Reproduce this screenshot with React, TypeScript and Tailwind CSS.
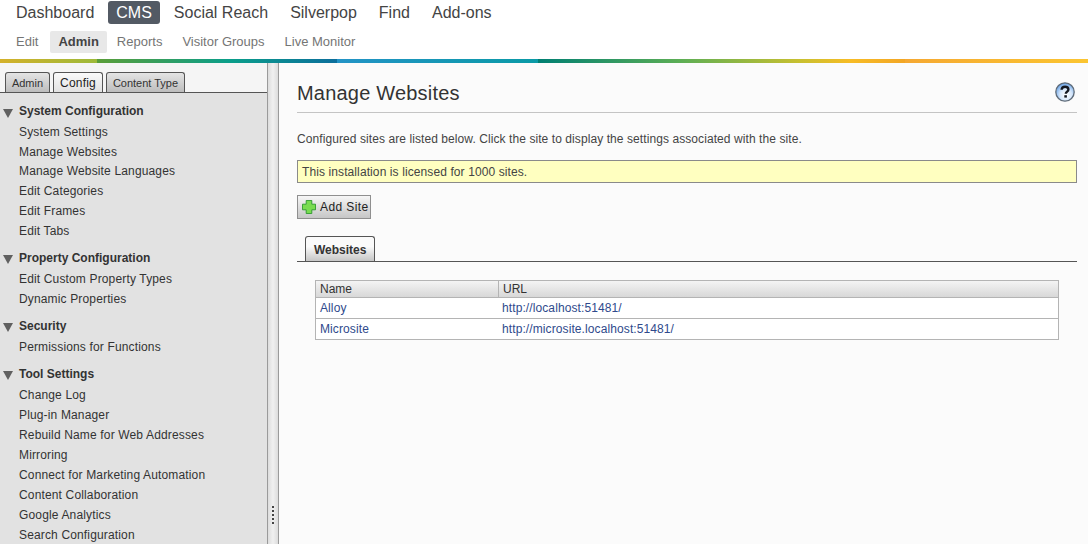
const font = "font-['Liberation_Sans',Arial,sans-serif]";

const mainNav = ["Dashboard", "CMS", "Social Reach", "Silverpop", "Find", "Add-ons"];
const subNav = ["Edit", "Admin", "Reports", "Visitor Groups", "Live Monitor"];

const sections = [
  {
    title: "System Configuration",
    items: ["System Settings", "Manage Websites", "Manage Website Languages", "Edit Categories", "Edit Frames", "Edit Tabs"],
  },
  {
    title: "Property Configuration",
    items: ["Edit Custom Property Types", "Dynamic Properties"],
  },
  {
    title: "Security",
    items: ["Permissions for Functions"],
  },
  {
    title: "Tool Settings",
    items: [
      "Change Log",
      "Plug-in Manager",
      "Rebuild Name for Web Addresses",
      "Mirroring",
      "Connect for Marketing Automation",
      "Content Collaboration",
      "Google Analytics",
      "Search Configuration",
    ],
  },
];

const sites = [
  { name: "Alloy", url: "http://localhost:51481/" },
  { name: "Microsite", url: "http://microsite.localhost:51481/" },
];

const TopNav = () => (
  <div className="h-[59px] bg-white">
    <div className="flex h-[24px] items-end gap-[2px] pl-[6px]">
      {mainNav.map((item) => (
        <span
          key={item}
          className={
            item === "CMS"
              ? "mx-[2px] flex h-[23px] items-center rounded-[3px] bg-[#535a64] px-[8px] text-[16px] text-white"
              : "flex h-[23px] items-center px-[10px] text-[16px] text-[#444444]"
          }
        >
          {item}
        </span>
      ))}
    </div>
    <div className="mt-[7px] flex items-center pl-[6px]">
      {subNav.map((item) => (
        <span
          key={item}
          className={
            item === "Admin"
              ? "ml-[2px] flex h-[22px] items-center rounded-[2px] bg-[#e8e8e8] px-[8px] text-[13px] font-bold text-[#444444]"
              : "flex h-[22px] items-center px-[10px] text-[13px] text-[#757575]"
          }
        >
          {item}
        </span>
      ))}
    </div>
  </div>
);

const SideTab = ({ label, width, active }: { label: string; width: string; active?: boolean }) => (
  <span
    className={
      active
        ? `flex h-[20px] items-center justify-center rounded-t-[3px] border border-b-0 border-[#555555] bg-gradient-to-b from-[#fafafa] to-[#e2e2e2] pt-[1px] text-[12px] tracking-[0.2px] text-[#222222] ${width}`
        : `flex h-[20px] items-center justify-center rounded-t-[3px] border border-b-0 border-[#555555] bg-gradient-to-b from-[#e4e4e4] to-[#bdbdbd] pt-[1px] text-[11px] text-[#333333] ${width}`
    }
  >
    {label}
  </span>
);

const Sidebar = () => (
  <div className="flex h-full w-[279px] shrink-0">
    <div className="flex w-[267px] flex-col overflow-hidden bg-[#e2e2e2]">
      <div className="flex h-[30px] shrink-0 items-end gap-[3px] border-b border-[#555555] bg-[#f5f5f5] pl-[5px]">
        <SideTab label="Admin" width="w-[45px]" />
        <SideTab label="Config" width="w-[50px]" active />
        <SideTab label="Content Type" width="w-[79px]" />
      </div>
      <div className="pt-[8px]">
        {sections.map((section, index) => (
          <div key={section.title} className="mb-[7px]">
            <div className="flex h-[21px] items-center gap-[6px] pb-[1px] pl-[3px]">
              <svg width="10" height="9" viewBox="0 0 10 9" className="mt-[4px] shrink-0">
                <path d="M0 0h10L5 9z" fill="#606060" />
              </svg>
              <span className="text-[12px] font-bold text-[#333333]">{section.title}</span>
            </div>
            {section.items.map((item) => (
              <div
                key={item}
                className={
                  index === 0
                    ? "flex h-[19.8px] items-center pl-[19px] text-[12px] tracking-[0.15px] text-[#333333]"
                    : "flex h-[20px] items-center pl-[19px] text-[12px] tracking-[0.15px] text-[#333333]"
                }
              >
                {item}
              </div>
            ))}
          </div>
        ))}
      </div>
    </div>
    <div className="flex w-[12px] items-end justify-center border-x border-[#9a9a9a] bg-gradient-to-r from-[#dddddd] via-[#f0f0f0] to-[#dcdcdc] pb-[20px]">
      <div className="flex flex-col gap-[2px]">
        {[0, 1, 2, 3, 4].map((i) => (
          <span key={i} className="block h-[2px] w-[2px] bg-[#444444]" />
        ))}
      </div>
    </div>
  </div>
);

const HelpIcon = () => (
  <svg width="20" height="20" viewBox="0 0 20 20">
    <defs>
      <radialGradient id="help" cx="0.55" cy="0.65" r="0.65">
        <stop offset="0" stopColor="#ffffff" />
        <stop offset="0.5" stopColor="#d5e6fa" />
        <stop offset="1" stopColor="#5f9de6" />
      </radialGradient>
    </defs>
    <circle cx="10" cy="10" r="9.2" fill="url(#help)" stroke="#5f6b78" strokeWidth="1.3" />
    <path
      d="M6.6 7.8c.1-2 1.5-3.1 3.5-3.1 1.9 0 3.3 1.1 3.3 2.7 0 2.3-2.6 2.2-2.6 4.4"
      fill="none"
      stroke="#141821"
      strokeWidth="2.4"
    />
    <rect x="9.3" y="13.2" width="2.6" height="2.4" fill="#141821" />
  </svg>
);

const PlusIcon = () => (
  <svg width="14" height="14" viewBox="0 0 15 15">
    <path
      d="M4.5 .5h6v4h4v6h-4v4h-6v-4h-4v-6h4z"
      fill="#78dc50"
      stroke="#2f9a2f"
      strokeWidth="1"
    />
  </svg>
);

const Content = () => (
  <div className="min-w-0 flex-1 bg-[#fbfbfb] pl-[18px] pr-[11px]">
    <div className="flex h-[50px] items-end justify-between border-b border-[#c4c4c4] pb-[7px]">
      <h1 className="text-[20px] leading-[24px] tracking-[0.2px] text-[#333333]">Manage Websites</h1>
      <span className="mb-[3px] mr-[2px]">
        <HelpIcon />
      </span>
    </div>
    <p className="mt-[19px] text-[12px] leading-[14px] tracking-[0.08px] text-[#444444]">
      Configured sites are listed below. Click the site to display the settings associated with the site.
    </p>
    <div className="mt-[14px] flex h-[23px] items-center border border-[#8a8a8a] bg-[#ffffc0] pl-[4px] text-[12px] tracking-[0.1px] text-[#444444]">
      This installation is licensed for 1000 sites.
    </div>
    <button className="mt-[12px] flex h-[24px] w-[74px] items-center gap-[4px] border border-[#8f8f8f] bg-gradient-to-b from-[#f6f6f6] to-[#c6c6c6] pl-[4px] text-[12px] tracking-[0.4px] text-[#222222]">
      <PlusIcon />
      Add Site
    </button>
    <div className="mt-[17px] flex h-[26px] items-end border-b border-[#555555] pl-[8px]">
      <span className="flex h-[25px] items-center rounded-t-[3px] border border-b-0 border-[#555555] bg-gradient-to-b from-[#fafafa] from-40% to-[#c6c6c6] px-[8px] pt-[1px] text-[12px] font-bold text-[#333333]">
        Websites
      </span>
    </div>
    <div className="ml-[18px] mr-[18px] mt-[18px] border border-b-0 border-[#b4b4b4] text-[12px]">
      <div className="flex h-[17px] border-b border-[#b4b4b4] bg-gradient-to-b from-[#f4f4f4] to-[#d8d8d8] text-[#333333]">
        <span className="flex w-[183px] items-center border-r border-[#b4b4b4] pl-[4px]">Name</span>
        <span className="flex items-center pl-[4px]">URL</span>
      </div>
      {sites.map((site) => (
        <div key={site.name} className="flex h-[21px] items-center border-b border-[#b4b4b4] bg-white tracking-[0.1px] text-[#2f4a8c]">
          <span className="w-[183px] pl-[4px]">{site.name}</span>
          <span className="pl-[3px]">{site.url}</span>
        </div>
      ))}
    </div>
  </div>
);

export default function App() {
  return (
    <div className={`${font} flex h-[544px] w-[1088px] flex-col overflow-hidden`}>
      <TopNav />
      <div className="h-[4px] shrink-0 bg-[linear-gradient(90deg,#d4b12a_0px,#9dba3a_97px,#5a9e38_97px,#0a9e8a_230px,#0c6e9c_337px,#2393c6_337px,#0a9aa6_538px,#007f72_538px,#5cae55_680px,#c8c030_800px,#f7bc25_850px,#f2a625_905px,#f5a832_905px,#fbc531_1088px)]" />
      <div className="flex min-h-0 flex-1">
        <Sidebar />
        <Content />
      </div>
    </div>
  );
}
